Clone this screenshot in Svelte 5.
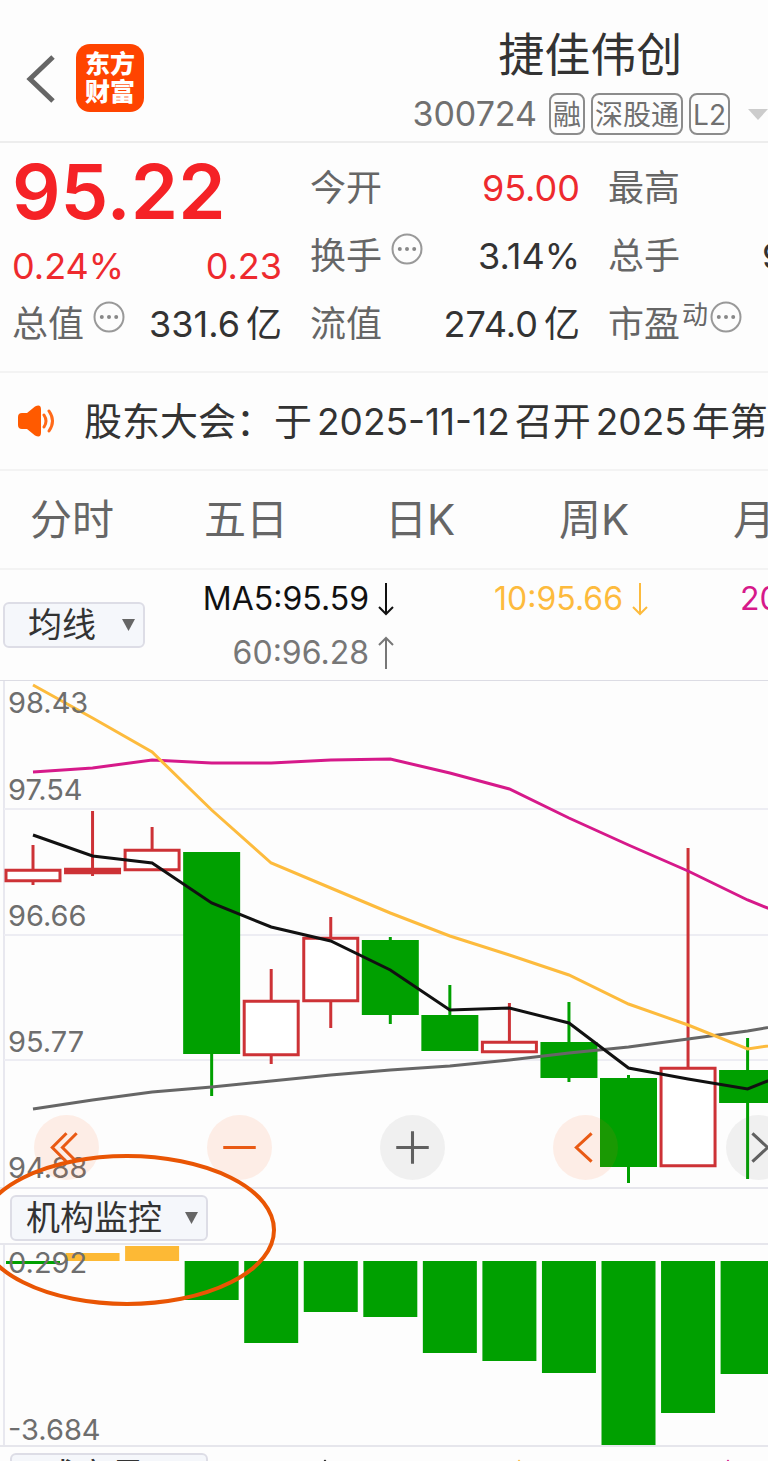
<script lang="ts">
  const firstX = 33;
  const pitch = 59.55;
  const bodyWidth = 57;
  const barWidth = 54;

  const tabs = ["分时", "五日", "日K", "周K", "月K"];

  const gridLines = [128, 254, 379];
  const priceLabels = [
    { y: 32, text: "98.43" },
    { y: 119, text: "97.54" },
    { y: 245, text: "96.66" },
    { y: 371, text: "95.77" },
    { y: 497, text: "94.88" },
  ];

  // body top, body bottom, wick top, wick bottom
  const candles = [
    { up: true, top: 188, bottom: 201, high: 164, low: 204 },
    { up: true, top: 187, bottom: 193, high: 130, low: 195 },
    { up: true, top: 168, bottom: 190, high: 146, low: 190 },
    { up: false, top: 171, bottom: 373, high: 171, low: 415 },
    { up: true, top: 319, bottom: 375, high: 288, low: 383 },
    { up: true, top: 256, bottom: 321, high: 236, low: 347 },
    { up: false, top: 259, bottom: 334, high: 256, low: 343 },
    { up: false, top: 334, bottom: 370, high: 304, low: 370 },
    { up: true, top: 360, bottom: 372, high: 322, low: 372 },
    { up: false, top: 361, bottom: 397, high: 321, low: 401 },
    { up: false, top: 397, bottom: 486, high: 394, low: 502 },
    { up: true, top: 386, bottom: 486, high: 167, low: 486 },
    { up: false, top: 389, bottom: 422, high: 357, low: 498 },
  ];

  const averages = [
    { color: "#666", values: [428, 419, 411, 406, 400, 394, 389, 385, 379, 372, 366, 358, 350, 340] },
    { color: "#d6198a", values: [91, 87, 79, 82, 82, 79, 78, 92, 108, 137, 164, 190, 219, 243] },
    { color: "#fdbb3d", values: [4, 37, 71, 129, 182, 207, 232, 255, 274, 294, 323, 344, 368, 359] },
    { color: "#111", values: [154, 175, 182, 222, 246, 260, 289, 329, 327, 342, 387, 398, 408, 384] },
  ];

  // distance from the zero line, positive goes up
  const flows = [-3, 8, 15, -39, -82, -51, -56, -92, -100, -112, -184, -152, -113];
  const zeroY = 16;

  const centerX = (i: number) => firstX + i * pitch;
  const toPoints = (values: number[]) =>
    values.map((y, i) => `${centerX(i)},${y}`).join(" ");

  let activeTab = $state("日K");
  let overlay = $state("均线");
  let indicator = $state("机构监控");
  let secondIndicator = $state("成交量");
</script>

{#snippet info()}
  <svg class="info" viewBox="0 0 32 32" aria-hidden="true">
    <circle cx="16" cy="16" r="14.5" fill="none" stroke="#999" stroke-width="2" />
    <circle cx="8.8" cy="16" r="2" fill="#888" />
    <circle cx="16" cy="16" r="2" fill="#888" />
    <circle cx="23.2" cy="16" r="2" fill="#888" />
  </svg>
{/snippet}

{#snippet arrow(up: boolean)}
  <svg class="arrow" viewBox="0 0 18 34" aria-hidden="true">
    <path
      d={up ? "M9 33V2M2 9l7-7 7 7" : "M9 1v31M2 25l7 7 7-7"}
      fill="none"
      stroke="currentColor"
      stroke-width="2"
    />
  </svg>
{/snippet}

<div class="page">
  <header class="header">
    <button class="back" aria-label="返回">
      <svg viewBox="0 0 32 52" width="32" height="52">
        <path d="M29 4L6 26l23 22" fill="none" stroke="#666" stroke-width="5" />
      </svg>
    </button>
    <a class="logo" href="#home">
      <span>东方</span>
      <span>财富</span>
    </a>
    <div class="stock">
      <h1>捷佳伟创</h1>
      <div class="stock-meta">
        <span class="code">300724</span>
        <span class="tag">融</span>
        <span class="tag">深股通</span>
        <span class="tag">L2</span>
        <svg class="more" viewBox="0 0 20 11" aria-hidden="true">
          <path d="M0 0h20L10 11z" fill="#ccc" />
        </svg>
      </div>
    </div>
  </header>

  <section class="quote">
    <div class="cell price">95.22</div>
    <div class="cell"><span>今开</span><b class="red">95.00</b></div>
    <div class="cell"><span>最高</span></div>

    <div class="cell change"><b class="red">0.24%</b><b class="red">0.23</b></div>
    <div class="cell"><span>换手</span>{@render info()}<b>3.14%</b></div>
    <div class="cell total"><span>总手</span><b>9</b></div>

    <div class="cell">
      <span>总值</span>{@render info()}<b>331.6<i>亿</i></b>
    </div>
    <div class="cell"><span>流值</span><b>274.0<i>亿</i></b></div>
    <div class="cell"><span>市盈</span><sup>动</sup>{@render info()}</div>
  </section>

  <a class="notice" href="#notice">
    <svg class="speaker" viewBox="0 0 38 32" aria-hidden="true">
      <path
        d="M4 8h5l8-6.500q6-3 6 3v23q0 6-6 3L9 24H4q-4 0-4-4v-8q0-4 4-4z"
        fill="#ff5a00"
      />
      <path
        d="M26 10q4 6 0 12M31 6q7 10 0 20"
        fill="none"
        stroke="#ff6a1a"
        stroke-width="3"
        stroke-linecap="round"
      />
    </svg>
    <span>股东大会：于<i>2025-11-12</i>召开<i>2025</i>年第二次</span>
  </a>

  <nav class="tabs">
    {#each tabs as tab}
      <button onclick={() => (activeTab = tab)}>{tab}</button>
    {/each}
  </nav>

  <div class="legend">
    <select class="picker small" aria-label="主图指标" bind:value={overlay}>
      <option>均线</option>
    </select>
    <div class="legend-values">
      <span class="ma5">MA5:95.59{@render arrow(false)}</span>
      <span class="ma10">10:95.66{@render arrow(false)}</span>
      <span class="ma20">20</span>
      <span class="ma60">60:96.28{@render arrow(true)}</span>
    </div>
  </div>

  <div class="kline">
    <svg class="plot kline-plot">
      {#each gridLines as y}
        <line x1="4" x2="100%" y1={y} y2={y} stroke="#ededf3" stroke-width="2" />
      {/each}
      {#each candles as c, i}
        <line
          x1={centerX(i)}
          x2={centerX(i)}
          y1={c.high}
          y2={c.low}
          stroke={c.up ? "#cd3236" : "#00a000"}
          stroke-width="3"
        />
        {#if c.up}
          <rect
            x={centerX(i) - bodyWidth / 2 + 1.5}
            y={c.top + 1.25}
            width={bodyWidth - 3}
            height={c.bottom - c.top - 2.5}
            fill={c.bottom - c.top < 8 ? "#cd3236" : "#fff"}
            stroke="#cd3236"
            stroke-width="3"
          />
        {:else}
          <rect
            x={centerX(i) - bodyWidth / 2}
            y={c.top}
            width={bodyWidth}
            height={c.bottom - c.top}
            fill="#00a000"
          />
        {/if}
      {/each}
      {#each averages as line}
        <polyline
          points={toPoints(line.values)}
          fill="none"
          stroke={line.color}
          stroke-width="3"
        />
      {/each}
      {#each priceLabels as label}
        <text x="8" y={label.y}>{label.text}</text>
      {/each}
    </svg>

    <div class="controls">
      <button class="warm" aria-label="最早">
        <svg viewBox="0 0 64 64"><path d="M32 18L18 32l14 14M42 18L28 32l14 14" /></svg>
      </button>
      <button class="warm" aria-label="缩小">
        <svg viewBox="0 0 64 64"><path d="M16 32h32" /></svg>
      </button>
      <button aria-label="放大">
        <svg viewBox="0 0 64 64"><path d="M16 32h32M32 16v32" /></svg>
      </button>
      <button class="warm" aria-label="前移">
        <svg viewBox="0 0 64 64"><path d="M38 18L23 32l15 14" /></svg>
      </button>
      <button aria-label="后移">
        <svg viewBox="0 0 64 64"><path d="M26 18l15 14-15 14" /></svg>
      </button>
    </div>
  </div>

  <div class="indicator">
    <select class="picker" aria-label="副图指标" bind:value={indicator}>
      <option>机构监控</option>
    </select>
    <svg class="mark" viewBox="0 0 280 156" aria-hidden="true">
      <ellipse cx="127" cy="78" rx="147" ry="74" fill="none" stroke="#e95504" stroke-width="4" />
    </svg>
  </div>

  <svg class="plot flow-plot">
    {#each flows as value, i}
      <rect
        x={centerX(i) - barWidth / 2}
        y={value > 0 ? zeroY - value : zeroY}
        width={barWidth}
        height={Math.abs(value)}
        fill={value > 0 ? "#fdb935" : "#00a000"}
      />
    {/each}
    <text x="8" y="28">0.292</text>
    <text x="8" y="195">-3.684</text>
  </svg>

  <div class="indicator second">
    <select class="picker" aria-label="第二副图指标" bind:value={secondIndicator}>
      <option>成交量</option>
    </select>
    <div class="second-values">
      <span class="ma5">{@render arrow(true)}</span>
      <span class="ma10">{@render arrow(true)}</span>
      <span class="ma20">{@render arrow(true)}</span>
    </div>
  </div>
</div>

<style>
  :global(body) {
    margin: 0;
    background: #fdfdfd;
  }
  .page {
    height: 100vh;
    overflow: hidden;
    color: #333;
    font-family: Inter, "Noto Sans CJK SC", sans-serif;
    font-weight: 400;
  }
  .page :global(*) {
    box-sizing: border-box;
  }
  button,
  select {
    font-family: inherit;
    color: inherit;
    cursor: pointer;
  }
  button {
    padding: 0;
    border: none;
    background: none;
  }
  a {
    color: inherit;
    text-decoration: none;
  }
  i {
    font-style: normal;
  }

  .header {
    display: flex;
    align-items: flex-start;
    height: 143px;
    padding: 26px 0 0 24px;
    border-bottom: 2px solid #ededed;
  }
  .back {
    margin-top: 27px;
    height: 52px;
  }
  .logo {
    display: flex;
    flex-direction: column;
    align-items: center;
    justify-content: center;
    width: 68px;
    height: 68px;
    margin: 18px 0 0 20px;
    border-radius: 14px;
    background: #ff4400;
    color: #fff;
    font-size: 25px;
    font-weight: 900;
    line-height: 28px;
  }
  .stock {
    display: flex;
    flex-direction: column;
    align-items: center;
    margin-left: auto;
  }
  h1 {
    margin: 0;
    font-size: 46px;
    font-weight: 400;
    line-height: 56px;
  }
  .stock-meta {
    display: flex;
    align-items: center;
    gap: 6px;
    margin-top: 10px;
    color: #707070;
  }
  .code {
    margin-right: 6px;
    font-size: 34px;
    line-height: 44px;
  }
  .tag {
    height: 42px;
    padding: 0 2px;
    border: 2px solid #8c8c8c;
    border-radius: 8px;
    font-size: 28px;
    line-height: 40px;
  }
  .more {
    width: 20px;
    height: 11px;
    margin-left: 12px;
  }

  .quote {
    display: grid;
    grid-template-columns: repeat(3, 270px);
    grid-auto-rows: 68px;
    column-gap: 28px;
    padding: 11px 0 13px 12px;
    border-bottom: 2px solid #f3f3f3;
    font-size: 36px;
    line-height: 44px;
  }
  .cell {
    display: flex;
    align-items: center;
    color: #666;
    white-space: nowrap;
  }
  .cell b {
    margin-left: auto;
    color: #333;
    font-weight: 400;
  }
  .cell b:first-child {
    margin-left: 0;
  }
  .cell b.red {
    color: #ee2a2e;
  }
  .cell.total b {
    margin-left: 82px;
  }
  .cell i {
    margin-left: 6px;
  }
  .cell.price {
    padding-top: 6px;
    color: #f52226;
    font-size: 76px;
    font-weight: 600;
  }
  .cell.change {
    padding-top: 20px;
  }
  .cell sup {
    align-self: flex-start;
    margin: 8px 2px 0;
    font-size: 26px;
    line-height: 34px;
  }
  .info {
    align-self: flex-start;
    width: 32px;
    height: 32px;
    margin: 11px 0 0 9px;
  }
  sup + .info {
    margin-left: 0;
  }

  .notice {
    display: flex;
    align-items: center;
    height: 98px;
    padding-left: 18px;
    border-bottom: 2px solid #f3f3f3;
    font-size: 38px;
    line-height: 44px;
    white-space: nowrap;
  }
  .notice i {
    margin: 0 5px;
    font-size: 37px;
  }
  .speaker {
    flex: none;
    width: 38px;
    height: 32px;
    margin-right: 28px;
  }

  .tabs {
    display: flex;
    height: 99px;
    margin-left: -15px;
    border-bottom: 2px solid #f3f3f3;
    color: #666;
  }
  .tabs button {
    flex: none;
    width: 174px;
    font-size: 42px;
    line-height: 48px;
  }

  .legend {
    display: flex;
    align-items: center;
    height: 110px;
    padding-left: 3px;
  }
  .picker {
    flex: none;
    width: 198px;
    height: 46px;
    padding: 0 30px 0 0;
    border: 2px solid #dddde6;
    border-radius: 6px;
    appearance: none;
    background: #f5f7fb
      url("data:image/svg+xml,%3Csvg xmlns='http://www.w3.org/2000/svg' viewBox='0 0 13 12'%3E%3Cpath d='M0 0h13L6.5 12z' fill='%23666'/%3E%3C/svg%3E")
      no-repeat right 8px center / 13px 12px;
    font-size: 34px;
    line-height: 42px;
    text-align: center;
    text-align-last: center;
  }
  .picker.small {
    width: 142px;
    padding-right: 24px;
  }
  .legend-values {
    display: grid;
    grid-template-columns: 250px 254px 140px;
    grid-auto-rows: 54px;
    padding-top: 2px;
    font-size: 32px;
    line-height: 54px;
  }
  .legend-values span {
    display: flex;
    align-items: center;
    justify-content: flex-end;
  }
  .legend-values .ma20 {
    justify-content: flex-start;
    padding-left: 91px;
  }
  .arrow {
    width: 18px;
    height: 34px;
    margin-left: 8px;
  }
  .ma5 {
    color: #111;
  }
  .ma10 {
    color: #fdbb3d;
  }
  .ma20 {
    color: #d6198a;
  }
  .ma60 {
    color: #777;
  }

  .plot {
    display: block;
    width: 100%;
  }
  .plot text {
    fill: #6e6e6e;
    font-size: 29px;
  }
  .kline {
    position: relative;
  }
  .kline-plot {
    height: 509px;
    border: solid #dcdce4;
    border-width: 1px 0 2px 0;
    border-bottom-color: #e6e6ec;
    box-shadow: inset 3px 0 #fdfdfd, inset 5px 0 #e8e8ef;
  }
  .controls {
    position: absolute;
    left: 34px;
    bottom: 9px;
    display: flex;
    gap: 108px;
  }
  .controls button {
    flex: none;
    width: 65px;
    height: 65px;
    border-radius: 50%;
    background: rgba(90, 90, 90, 0.08);
    color: #606060;
  }
  .controls .warm {
    background: rgba(255, 100, 30, 0.1);
    color: #e95a14;
  }
  .controls path {
    fill: none;
    stroke: currentColor;
    stroke-width: 3;
  }

  .indicator {
    position: relative;
    display: flex;
    align-items: flex-start;
    height: 54px;
    padding: 6px 0 0 10px;
  }
  .mark {
    position: absolute;
    top: -37px;
    left: 0;
    width: 280px;
    height: 156px;
    pointer-events: none;
  }
  .flow-plot {
    height: 204px;
    border: solid #e6e6ec;
    border-width: 2px 0;
    box-shadow: inset 3px 0 #fdfdfd, inset 5px 0 #e8e8ef;
  }
  .second-values {
    display: grid;
    grid-template-columns: 126px 194px 209px;
    padding-top: 6px;
    justify-items: end;
  }
</style>
